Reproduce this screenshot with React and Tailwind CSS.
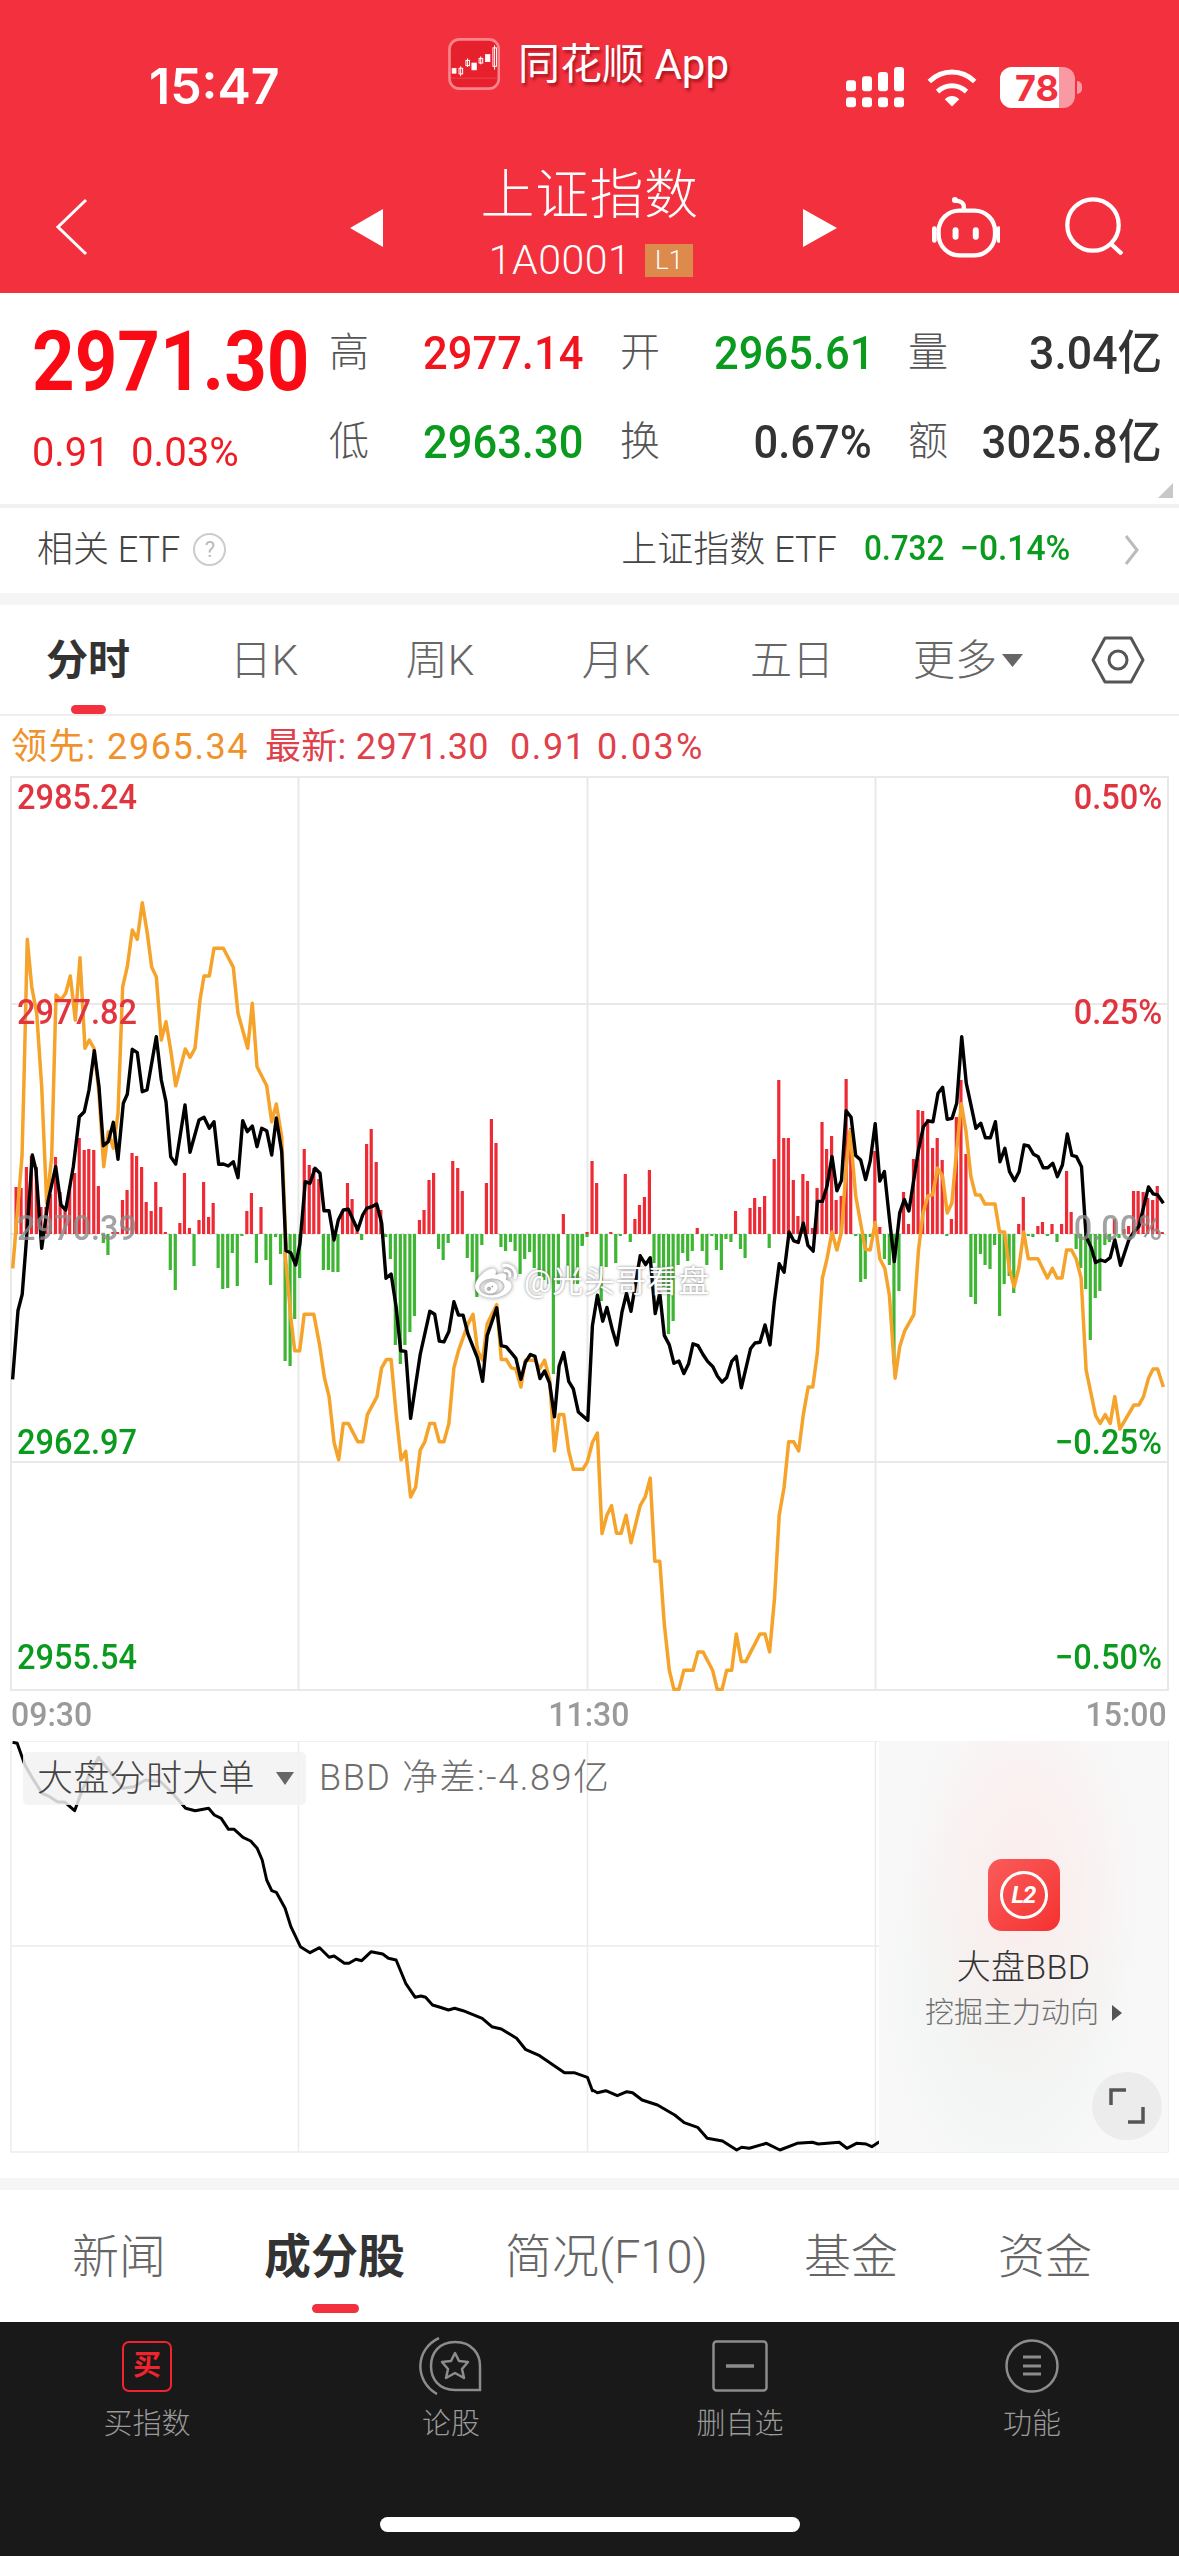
import React from "react";
import { FaWeibo } from "react-icons/fa";

const map = (fx, fy) => (a) => {
  const out = [];
  for (let i = 0; i < a.length; i += 2) out.push([fx(a[i]), fy(a[i + 1])]);
  return out;
};
const z3 = map((x) => x / 2.613, (y) => 1100 + y / 2.613);
const z8 = map((x) => 579 + x / 2.613, (y) => 1100 + y / 2.613);
const z4 = map((x) => 579 + x / 2.613, (y) => 760 + y / 3);
const z9 = map((x) => x / 3, (y) => 880 + y / 3);
const z5 = map((x) => x / 2.613, (y) => 1680 + y / 3);
const z6 = map((x) => 579 + x / 2.613, (y) => 1680 + y / 3);
const pts = (l) => l.map(([x, y]) => `${x.toFixed(1)},${y.toFixed(1)}`).join(" ");

const black = [
  ...z3([33,730,47,550,58,508,68,380]),
  ...z9([85,1000,97,825,108,870,125,1105,145,960,167,860,183,975,197,990,220,860,238,710,253,695,267,630,283,512,297,620,310,797,325,785,340,727,354,838,370,670,382,643,397,508,412,518,427,635,441,630,469,470,484,600,498,665,512,830,527,852,555,675,570,817,597,720,612,712,628,745,642,725,656,853,670,852,685,858,700,845,714,893,728,722,742,755,757,738,771,800,785,745,800,752,815,825,829,714,845,815,858,1112,872,1118,887,1155,900,1090,916,905,930,910,945,865,960,880,972,992,987,992,1002,1080,1015,1020,1030,990,1045,988,1073,1050,1088,1005,1100,985,1115,980,1130,972,1145,1030,1158,1195]),
  ...z3([1022,455,1035,540,1047,655,1060,657,1073,832,1098,665,1123,552,1136,560,1148,630,1160,632,1173,605,1186,527,1198,562,1210,562,1223,612,1248,675,1261,735,1273,615,1298,543,1310,642,1323,645,1348,675,1361,730,1373,685,1386,665,1398,670,1411,728,1423,708,1436,740,1449,828,1461,695,1473,660,1486,735,1498,755,1511,815,1536,837,1548,590,1561,510]),
  ...z8([62,578,73,542,87,600,99,640,112,555,124,505,136,552,160,407,174,430,186,412,199,558,211,505,223,615,236,640,248,688,261,682,274,715,286,690,298,637,311,642,324,665,336,683,350,697,362,722,374,737,386,725,399,683,411,670,424,752,448,650,460,635,473,633,486,588,499,640,510,530,523,428,536,450,549,345,561,368,573,372,586,322,598,380,612,395,623,265,636,265,648,225,661,148,674,237,686,210,698,28,711,45,723,145,736,157,749,208,761,160,774,62,786,212,798,187,811,310,824,422,838,295,850,260,862,290,887,130,900,70,912,55]),
  ...z4([925,1085,938,1000,950,982,962,1078,975,1075,987,1030,1000,830,1012,970,1025,1040,1037,1105,1050,1090,1062,1133,1075,1133,1088,1085,1100,1205,1113,1165,1125,1235,1138,1262,1150,1235,1163,1155,1175,1158,1188,1183,1200,1190,1213,1223,1225,1223,1238,1210,1250,1250,1263,1215,1276,1122,1288,1186,1300,1190,1313,1220,1325,1430]),
  ...z8([1338,385,1350,425,1363,418,1375,422,1388,412,1400,365,1415,432,1437,365,1450,345,1463,330,1488,227,1500,245,1512,248,1527,270]),
];

const orange = [
  ...z9([38,1165,52,1000,66,830,72,600,82,178,95,320,110,400,125,620,140,970,155,830,168,345,182,360,197,340,211,288,226,420,240,233,255,505,268,480,282,505,297,640,311,860,325,755,340,805,354,700,368,320,382,260,397,150,412,178,427,68,442,160,455,262,469,290,484,480,498,425,512,510,527,617,556,507,570,532,585,505,600,360,612,288,628,288,642,205,670,205,700,262,714,400,743,505,757,370,771,560,800,617,815,725,829,672,845,770,858,1100]),
  ...z3([745,400,760,570,770,655,783,655,795,560,820,560,835,640,848,727,860,775,873,895,885,940,897,845,910,845,935,893,948,893,960,822,985,775,997,700,1010,678,1022,678,1035,820,1048,940,1060,918,1073,1037,1086,1012,1098,915,1110,893,1123,845,1135,845,1148,893,1160,893,1173,845,1186,700,1198,655,1223,585,1236,560,1248,655,1261,680,1273,585,1298,535,1310,678,1323,678,1336,700,1348,703,1361,750,1373,680,1398,680,1410,703,1423,680,1436,730,1449,917,1461,822,1473,822,1486,917,1498,965,1523,965,1535,945,1548,895,1561,870]),
  ...z8([60,1133,73,1085,85,1060,98,1132,110,1132,123,1085,136,1157,160,1060,173,1037,186,988,198,1205,211,1205,223,1370,236,1490,248,1540,261,1540,274,1490,298,1490,311,1442,324,1442,349,1490,361,1540,374,1540,386,1490,399,1490,411,1395,424,1467,436,1467,473,1395,486,1395,498,1442,511,1300,523,1085,536,1012,548,893,561,893,574,917,586,822,599,750,611,750,623,660,636,465,648,415,661,345,674,392,686,345,698,180,708,80,723,250,748,390,761,392,774,320,786,415,799,440,811,510,826,727,838,645,851,603,875,560,887,392,899,295,912,250,924,248,937,178,950,200,962,295,974,270,987,130,999,10,1011,80,1024,200,1036,248,1048,248,1061,272,1087,272,1099,345,1112,345,1124,440,1137,488,1149,440,1162,345,1174,415,1199,415,1224,465,1237,440,1249,465,1262,465,1274,392,1287,392,1299,415,1312,465,1325,705,1350,825,1362,845,1375,822,1388,845,1400,775,1413,860,1450,797,1463,797,1475,775,1488,727,1500,703,1512,703,1527,750]),
];

const lower = [
  ...z5([33,187,45,190,65,255,85,295,110,340,130,350,150,365,170,367,195,392,215,330,235,280,258,232,290,280,320,325,350,320,380,300,420,305,455,345,485,385,510,392,545,385,560,405,578,415,597,448,612,448,635,472,655,483,672,505,685,540,697,600,710,632,722,637,745,685,760,740,785,800,810,818,835,803,860,832,873,828,900,850,912,850,930,838,945,842,970,815,1000,822,1015,835,1035,840,1060,910,1085,952,1100,948,1112,952,1130,975,1150,982,1172,990,1188,985,1210,992,1260,1015,1285,1040,1310,1047,1350,1075,1373,1108,1410,1127,1475,1178,1500,1178,1535,1192,1548,1232]),
  ...z6([35,1230,48,1238,70,1232,100,1247,125,1235,140,1238,165,1260,205,1275,250,1305,275,1328,310,1342,335,1375,375,1383,412,1410,425,1402,445,1405,490,1390,525,1410,570,1390,610,1387,625,1392,680,1387,700,1405,725,1390,750,1392,765,1400,785,1385]),
];

const barsA = [42,47,55,46,69,67,82,78,95,67,107,27,120,27,132,40,145,77,157,42,170,25,182,48,195,61,207,96,220,84,232,85,245,84,257,48,270,-9,282,-21,295,2,307,2,320,34,332,44,345,81,357,78,370,67,382,32,395,23,407,52,420,27,432,2,445,-36,458,-56,470,11,482,61,495,6,507,-32,520,14,532,52,545,17,557,31,570,-34,582,-55,595,-54,607,-19,620,-52,632,-2,645,23,657,41,670,-29,682,27,695,-26,707,-51,720,-3,733,-20,745,-127,758,-132,770,-85,783,-44,795,85,808,69,820,66,833,55,845,-36,858,-36,870,-38,883,-38,895,23,908,51,920,35,933,8,945,-6,958,90,970,105,983,72,995,24,1008,-3,1020,-25,1033,-111,1046,-130,1058,-111,1071,-98,1083,-82,1096,14,1108,24,1121,54,1133,61,1146,-15,1158,-26,1171,-9,1183,73,1196,66,1208,43,1221,-24,1234,-38,1246,-63,1259,-11,1271,51,1284,115,1296,91,1309,-13,1321,-17,1334,-8,1346,-17,1359,-40,1371,-25,1384,-18,1396,-34,1409,-42,1421,-46,1434,-50,1446,-140,1459,-50,1472,20,1484,-46,1497,-50,1509,-50,1522,-11,1534,2,1547,73,1559,51];
const barsB = [8,-12,21,-3,58,-67,71,-33,83,2,96,-29,108,-2,121,60,134,-8,146,15,158,29,171,37,184,64,196,-29,209,-43,221,-53,234,-100,246,-87,259,-31,271,-19,284,-27,296,-17,309,6,322,-17,334,-31,347,-2,359,-16,372,-36,384,-5,397,-8,409,23,422,-15,434,-24,447,26,459,36,472,27,485,38,497,-14,510,75,522,154,535,96,547,96,560,54,572,18,585,60,597,53,610,6,622,46,635,112,647,85,660,98,672,34,685,38,698,155,710,106,723,-2,736,-48,748,-45,761,-3,773,83,786,7,798,-25,811,-31,823,-130,836,-57,848,42,861,10,874,75,886,124,898,123,911,115,924,86,936,96,949,74,961,-2,973,15,986,117,998,154,1011,80,1024,-63,1036,-70,1049,-20,1061,-31,1074,-35,1086,-11,1099,-82,1111,-50,1124,-42,1136,-59,1149,10,1161,37,1174,-2,1186,-3,1199,8,1211,12,1224,-2,1236,10,1249,-8,1261,10,1274,63,1286,22,1299,-15,1311,-34,1324,-55,1336,-106,1349,-64,1361,-57,1374,-11,1386,-8,1399,15,1411,-4,1424,5,1436,8,1449,43,1461,43,1474,42,1486,36,1499,34,1511,48,1524,2];
const bars = [
  ...map((x) => x / 2.613, (h) => h)(barsA),
  ...map((x) => 579 + x / 2.613, (h) => h)(barsB),
];

function N({ children, className = "" }) {
  return <span className={`inline-block whitespace-nowrap ${className}`}>{children}</span>;
}

function Label({ children, className, right }) {
  return (
    <div className={`absolute text-[35px] leading-[40px] font-medium ${className}`}>
      <N className={`scale-x-[0.93] ${right ? "origin-right" : "origin-left"}`}>{children}</N>
    </div>
  );
}

function Quote({ label, value, color, right }) {
  return (
    <>
      <div className="text-[40px] leading-[44px] font-light text-[#555]">{label}</div>
      <div className={`text-[47px] leading-[44px] font-medium ${color} ${right ? "text-right" : ""}`}>
        <N className={`scale-x-[0.925] ${right ? "origin-right" : "origin-left"}`}>{value}</N>
      </div>
    </>
  );
}

function Tab({ children, active }) {
  return (
    <div className={`w-[176px] flex items-center justify-center pt-[2px] text-[42px] relative ${active ? "font-bold text-[#333]" : "font-light text-[#666]"}`}>
      {children}
      {active && <div className="absolute bottom-0 left-[71px] w-[35px] h-[9px] rounded-full bg-[#f3303e]" />}
    </div>
  );
}

function BottomItem({ icon, label }) {
  return (
    <div className="flex flex-col items-center">
      <div className="h-[58px] flex items-center justify-center">{icon}</div>
      <div className="mt-[11px] text-[29px] leading-[36px] font-light text-[#9a9a9a]">{label}</div>
    </div>
  );
}

export default function App() {
  return (
    <div className="w-[1179px] h-[2556px] overflow-hidden flex flex-col bg-white font-['Roboto','Noto_Sans_CJK_SC',sans-serif]">
      {/* Header */}
      <div className="h-[293px] shrink-0 bg-[#f3303e] text-white flex flex-col">
        <div className="h-[112px] flex items-start relative">
          <div className="absolute left-[149px] top-[60px] text-[50px] leading-[52px] font-semibold font-['Inter',sans-serif]">15:47</div>
          <div className="ml-[448px] mt-[37px] flex items-center">
            <svg width="52" height="52" viewBox="143 20 157 158">
              <rect x="147" y="24" width="150" height="150" rx="30" fill="#e6202c" stroke="#f8858c" strokeWidth="8" />
              <path d="M150 142H295" stroke="#f4555d" strokeWidth="2" />
              <g fill="#fff" stroke="#fff" strokeWidth="2">
                <rect x="155" y="112" width="12" height="15" />
                <rect x="215" y="96" width="14" height="21" />
                <rect x="256" y="70" width="14" height="22" />
              </g>
              <g fill="none" stroke="#fff" strokeWidth="3">
                <rect x="176" y="112" width="11" height="17" />
                <path d="M181 106V136" />
                <rect x="197" y="88" width="11" height="16" />
                <path d="M202 82V108" />
                <rect x="237" y="82" width="11" height="14" />
                <path d="M242 76V100" />
                <rect x="279" y="50" width="11" height="56" />
                <path d="M284 42V116" />
              </g>
            </svg>
            <div className="ml-[18px] mt-[2px] text-[42px] leading-[52px] whitespace-nowrap [text-shadow:2px_3px_3px_rgba(110,0,10,0.55)]">同花顺 App</div>
          </div>
          <div className="absolute left-[846px] top-[67px] flex items-center">
            <svg width="58" height="41" viewBox="138 112 174 123" fill="#fff">
              <rect x="138" y="203" width="30" height="30" rx="9" />
              <rect x="186" y="203" width="30" height="30" rx="9" />
              <rect x="234" y="203" width="30" height="30" rx="9" />
              <rect x="282" y="203" width="30" height="30" rx="9" />
              <rect x="138" y="152" width="30" height="33" rx="9" />
              <rect x="186" y="140" width="30" height="45" rx="9" />
              <rect x="234" y="127" width="30" height="58" rx="9" />
              <rect x="282" y="112" width="30" height="73" rx="9" />
            </svg>
            <svg className="ml-[23px]" width="50" height="38" viewBox="378 116 152 114" fill="none" stroke="#fff" strokeWidth="15">
              <path d="M385 153C425 115 483 115 523 153" />
              <path d="M410 184C435 160 473 160 498 184" />
              <path d="M432 207L454 229L476 207C462 194 446 194 432 207Z" fill="#fff" stroke="none" />
            </svg>
            <div className="ml-[23px] relative w-[75px] h-[41px] rounded-[12px] overflow-hidden bg-[#f99aa2]">
              <div className="h-full w-[59px] bg-white" />
              <div className="absolute left-[15px] top-0 h-full flex items-center text-[36px] font-bold text-[#f3303e] font-['Inter',sans-serif]">78</div>
            </div>
            <div className="ml-[2px] w-[5px] h-[13px] rounded-r-full bg-[#f99aa2]" />
          </div>
        </div>
        <div className="flex-1 relative flex items-start">
          <svg className="ml-[50px] mt-[84px]" width="42" height="62" viewBox="0 0 42 62" fill="none" stroke="#fff" strokeWidth="3">
            <path d="M36 4L8 31L36 58" />
          </svg>
          <svg className="ml-[258px] mt-[97px]" width="33" height="38" viewBox="0 0 33 38" fill="#fff">
            <path d="M33 0V38L0 19Z" />
          </svg>
          <div className="absolute left-[400px] top-[51px] w-[379px] flex flex-col items-center">
            <div className="text-[54px] leading-[66px] font-light tracking-[0.5px]">上证指数</div>
            <div className="flex items-center mt-[9px] pl-[3px]">
              <div className="text-[41px] leading-[44px] font-light tracking-[0.5px]">1A0001</div>
              <div className="ml-[14px] w-[48px] h-[33px] bg-[#dc8b4c] text-[26px] leading-[33px] text-center font-light">L1</div>
            </div>
          </div>
          <svg className="ml-[420px] mt-[97px]" width="34" height="38" viewBox="0 0 34 38" fill="#fff">
            <path d="M0 0V38L34 19Z" />
          </svg>
          <svg className="ml-[95px] mt-[82px]" width="68" height="64" viewBox="395 488 205 193" fill="none" stroke="#fff" strokeWidth="13">
            <rect x="415" y="538" width="170" height="135" rx="62" />
            <path d="M490 535C495 518 485 508 462 508" />
            <circle cx="464" cy="506" r="9" fill="#fff" stroke="none" />
            <rect x="395" y="585" width="14" height="50" rx="7" fill="#fff" stroke="none" />
            <rect x="590" y="585" width="12" height="50" rx="6" fill="#fff" stroke="none" />
            <rect x="457" y="588" width="18" height="38" rx="9" fill="#fff" stroke="none" />
            <rect x="518" y="588" width="18" height="38" rx="9" fill="#fff" stroke="none" />
          </svg>
          <svg className="ml-[65px] mt-[85px]" width="58" height="58" viewBox="795 498 176 176" fill="none" stroke="#fff" strokeWidth="13">
            <circle cx="880" cy="583" r="78" />
            <path d="M936 642L968 671" />
          </svg>
        </div>
      </div>

      {/* Quote */}
      <div className="h-[215px] shrink-0 relative flex border-b-[4px] border-[#f1f1f1]">
        <div className="w-[329px] pl-[32px] flex flex-col">
          <div className="mt-[27px] text-[84px] leading-[84px] font-bold text-[#fa0a14]">
            <N className="scale-x-[0.885] origin-left">2971.30</N>
          </div>
          <div className="mt-[28px] text-[41px] leading-[40px] text-[#ee1c24] flex">
            <N className="scale-x-[0.97] origin-left w-[99px]">0.91</N>
            <N className="scale-x-[0.98] origin-left">0.03%</N>
          </div>
        </div>
        <div className="pt-[38px] grid grid-cols-[94px_197px_94px_158px_76px_214px] gap-y-[45px] h-fit">
          <Quote label="高" value="2977.14" color="text-[#f0141e]" />
          <div className="text-[40px] leading-[44px] font-light text-[#555]">开</div>
          <div className="text-[47px] leading-[44px] font-medium text-[#0a9a1e]">
            <N className="scale-x-[0.925] origin-left">2965.61</N>
          </div>
          <div className="pl-[36px] text-[40px] leading-[44px] font-light text-[#555]">量</div>
          <div className="text-[47px] leading-[44px] font-medium text-[#333] text-right">
            <N className="scale-x-[0.95] origin-right">3.04亿</N>
          </div>
          <Quote label="低" value="2963.30" color="text-[#0a9a1e]" />
          <Quote label="换" value="0.67%" color="text-[#333]" right />
          <div className="pl-[36px] text-[40px] leading-[44px] font-light text-[#555]">额</div>
          <div className="text-[47px] leading-[44px] font-medium text-[#333] text-right">
            <N className="scale-x-[0.93] origin-right">3025.8亿</N>
          </div>
        </div>
        <svg className="absolute left-[1158px] top-[190px]" width="15" height="15" viewBox="0 0 15 15" fill="#c8c8c8">
          <path d="M15 0V15H0Z" />
        </svg>
      </div>

      {/* ETF */}
      <div className="h-[83px] mb-[2px] shrink-0 flex items-center text-[#444]">
        <div className="ml-[37px] text-[36px] font-light whitespace-nowrap">相关 ETF</div>
        <div className="ml-[13px] w-[33px] h-[33px] rounded-full border-[2px] border-[#ccc] text-[#bbb] text-[22px] flex items-center justify-center">?</div>
        <div className="ml-[395px] text-[36px] font-light whitespace-nowrap">上证指数 ETF</div>
        <div className="ml-[27px] text-[35px] font-medium text-[#0a9a1e] flex">
          <N className="w-[96px] scale-x-[0.9] origin-left">0.732</N>
          <N className="scale-x-[0.96] origin-left">−0.14%</N>
        </div>
        <svg className="ml-[49px]" width="15" height="30" viewBox="0 0 15 30" fill="none" stroke="#bbb" strokeWidth="3">
          <path d="M2 1L13 15L2 29" />
        </svg>
      </div>
      <div className="h-[12px] shrink-0 bg-[#f5f5f5]" />

      {/* Tabs */}
      <div className="h-[111px] shrink-0 flex border-b-[2px] border-[#eee]">
        <Tab active>分时</Tab>
        <Tab>日K</Tab>
        <Tab>周K</Tab>
        <Tab>月K</Tab>
        <Tab>五日</Tab>
        <Tab>
          更多
          <svg className="ml-[5px]" width="21" height="13" viewBox="0 0 21 13" fill="#666"><path d="M0 0H21L10.5 13Z" /></svg>
        </Tab>
        <div className="flex-1 flex items-center justify-center">
          <svg width="54" height="50" viewBox="0 0 54 50" fill="none" stroke="#555" strokeWidth="3">
            <path d="M14 3H40L52 25L40 47H14L2 25Z" strokeLinejoin="round" />
            <circle cx="27" cy="25" r="9" />
          </svg>
        </div>
      </div>

      {/* Info */}
      <div className="h-[60px] shrink-0 flex items-center pt-[2px] pl-[11px] text-[36px] whitespace-nowrap">
        <span className="text-[#f0922b] w-[254px] tracking-[1.6px]">领先: 2965.34</span>
        <span className="text-[#e0404a] w-[245px] tracking-[0.3px]">最新: 2971.30</span>
        <span className="text-[#e0404a] w-[87px] tracking-[1.6px]">0.91</span>
        <span className="text-[#e0404a] tracking-[2.2px]">0.03%</span>
      </div>

      {/* Main chart */}
      <div className="h-[915px] shrink-0 relative">
        <svg className="block" width="1179" height="915" viewBox="0 776 1179 915">
          <g stroke="#e9e9e9" strokeWidth="2" fill="none">
            <rect x="11" y="777" width="1157" height="913" />
            <path d="M11 1004H1168M11 1462H1168M298.5 776V1690M587.5 776V1690M875.5 776V1690" />
          </g>
          <path d="M11 1234H1168" stroke="#ccc" strokeWidth="1" strokeDasharray="3 3" />
          {bars.map(([x, h], i) => (
            <rect key={i} x={x - 1.6} width="3.2" y={h > 0 ? 1234 - h : 1234} height={Math.abs(h)} fill={h > 0 ? "#ee2a35" : "#3eb533"} />
          ))}
          <polyline points={pts(orange)} fill="none" stroke="#f5a32a" strokeWidth="3.5" strokeLinejoin="round" />
          <polyline points={pts(black)} fill="none" stroke="#000" strokeWidth="3.4" strokeLinejoin="round" />
        </svg>
        <Label className="left-[17px] top-[2px] text-[#e0353f]">2985.24</Label>
        <Label className="left-[17px] top-[217px] text-[#e0353f]">2977.82</Label>
        <Label className="left-[17px] top-[433px] text-[#8c8c8c] opacity-80">2970.39</Label>
        <Label className="left-[17px] top-[647px] text-[#0a9a1e]">2962.97</Label>
        <Label className="left-[17px] top-[862px] text-[#0a9a1e]">2955.54</Label>
        <Label right className="right-[17px] top-[2px] text-[#e0353f]">0.50%</Label>
        <Label right className="right-[17px] top-[217px] text-[#e0353f]">0.25%</Label>
        <Label right className="right-[17px] top-[433px] text-[#8c8c8c] opacity-80">0.00%</Label>
        <Label right className="right-[17px] top-[647px] text-[#0a9a1e]">−0.25%</Label>
        <Label right className="right-[17px] top-[862px] text-[#0a9a1e]">−0.50%</Label>
        <div className="absolute left-[475px] top-[484px] flex items-center text-white [text-shadow:0_0_3px_rgba(90,90,90,0.8)]">
          <FaWeibo className="text-[42px] drop-shadow-[0_0_2px_rgba(90,90,90,0.8)]" />
          <span className="ml-[7px] text-[31px] leading-[44px] tracking-[0.5px] whitespace-nowrap">@光头哥看盘</span>
        </div>
      </div>

      {/* Time axis */}
      <div className="h-[50px] shrink-0 flex items-center justify-between pl-[11px] pr-[12px] pb-[2px] text-[33px] text-[#9a9a9a] font-medium">
        <N className="scale-x-[0.97] origin-left">09:30</N>
        <N className="scale-x-[0.97] ml-[-1px]">11:30</N>
        <N className="scale-x-[0.97] origin-right">15:00</N>
      </div>

      {/* Lower chart */}
      <div className="h-[412px] shrink-0 relative">
        <svg className="block" width="1179" height="412" viewBox="0 1741 1179 412">
          <g stroke="#ececec" strokeWidth="1.5" fill="none">
            <rect x="11" y="1741" width="1157" height="411" />
            <path d="M11 1946H1168M298.5 1741V2152M587.5 1741V2152M875.5 1741V2152" />
          </g>
          <polyline points={pts(lower)} fill="none" stroke="#000" strokeWidth="3" strokeLinejoin="round" />
        </svg>
        <div className="absolute left-[23px] top-[11px] w-[283px] h-[53px] rounded-[5px] bg-[#f2f2f2]/85 flex items-center pl-[14px] text-[36px] text-[#444] font-light whitespace-nowrap tracking-[0.3px]">
          大盘分时大单
          <svg className="ml-[21px]" width="18" height="13" viewBox="0 0 18 13" fill="#666"><path d="M0 0H18L9 13Z" /></svg>
        </div>
        <div className="absolute left-[319px] top-[16px] text-[36px] leading-[42px] text-[#6e6e6e] tracking-[1.6px] whitespace-nowrap font-light">BBD 净差:-4.89亿</div>
        <div className="absolute left-[879px] top-0 w-[289px] h-[411px] bg-[#f8f8f8] bg-[radial-gradient(ellipse_at_50%_35%,#fcecec_0%,rgba(252,236,236,0)_58%),radial-gradient(ellipse_at_45%_62%,#edf3f0_0%,rgba(237,243,240,0)_60%)] flex flex-col items-center">
          <div className="mt-[118px] w-[72px] h-[72px] rounded-[14px] bg-gradient-to-br from-[#f95a5a] to-[#f5302f] flex items-center justify-center">
            <div className="w-[48px] h-[48px] rounded-full border-[3px] border-white flex items-center justify-center text-white italic font-bold text-[24px] tracking-[-1px]">L2</div>
          </div>
          <div className="mt-[15px] text-[34px] leading-[42px] text-[#333] font-light tracking-[0.3px]">大盘BBD</div>
          <div className="mt-[5px] flex items-center text-[29px] leading-[40px] text-[#6f6f6f] font-light whitespace-nowrap">
            挖掘主力动向
            <svg className="ml-[13px]" width="10" height="16" viewBox="0 0 10 16" fill="#555"><path d="M0 0L10 8L0 16Z" /></svg>
          </div>
          <div className="absolute left-[213px] top-[331px] w-[70px] h-[68px] rounded-full bg-[#ececec] flex items-center justify-center">
            <svg width="36" height="36" viewBox="0 0 36 36" fill="none" stroke="#555" strokeWidth="3.5">
              <path d="M2 17V2H17M34 19V34H19" />
            </svg>
          </div>
        </div>
      </div>

      <div className="h-[25px] shrink-0" />
      <div className="h-[12px] shrink-0 bg-[#f5f5f5]" />

      {/* News tabs */}
      <div className="h-[132px] shrink-0 relative flex items-center pl-[72px] pt-[2px] text-[47px] font-light text-[#666] whitespace-nowrap">
        <span className="w-[192px] shrink-0">新闻</span>
        <span className="w-[241px] shrink-0 font-bold text-[#333]">成分股</span>
        <span className="w-[299px] shrink-0">简况(F10)</span>
        <span className="w-[194px] shrink-0">基金</span>
        <span>资金</span>
        <div className="absolute left-[312px] top-[114px] w-[47px] h-[9px] rounded-full bg-[#f3303e]" />
      </div>

      {/* Bottom bar */}
      <div className="flex-1 bg-[#191919] relative">
        <div className="grid grid-cols-[294px_314px_264px_307px] pt-[15px]">
          <BottomItem
            label="买指数"
            icon={
              <div className="w-[50px] h-[51px] rounded-[7px] border-[2px] border-[#f0232e] flex items-center justify-center text-[#f0232e] text-[28px] font-bold leading-none">买</div>
            }
          />
          <BottomItem
            label="论股"
            icon={
              <svg width="64" height="58" viewBox="416 2338 64 58" fill="none" stroke="#8c8c8c" strokeWidth="2.5">
                <path d="M436 2339C412 2350 411 2382 434 2395" />
                <path d="M452 2343C470 2343 477 2356 477 2367V2391H452C436 2391 428 2380 428 2367C428 2354 436 2343 452 2343Z" />
                <path d="M452 2354L456 2362L465 2363L459 2370L461 2379L452 2374L443 2379L445 2370L439 2363L448 2362Z" strokeLinejoin="round" />
              </svg>
            }
          />
          <BottomItem
            label="删自选"
            icon={
              <svg width="56" height="52" viewBox="0 0 56 52" fill="none" stroke="#8c8c8c" strokeWidth="2.5">
                <rect x="1.5" y="1.5" width="53" height="49" rx="3" />
                <path d="M14 26H42" strokeWidth="3.5" />
              </svg>
            }
          />
          <div className="pl-[13px]">
            <BottomItem
              label="功能"
              icon={
                <svg width="54" height="54" viewBox="0 0 54 54" fill="none" stroke="#8c8c8c" strokeWidth="2.5">
                  <circle cx="27" cy="27" r="25.5" />
                  <path d="M18 18H36M18 27H36M18 35H36" strokeWidth="3" />
                </svg>
              }
            />
          </div>
        </div>
        <div className="absolute left-[380px] top-[195px] w-[420px] h-[15px] rounded-full bg-white" />
      </div>
    </div>
  );
}
